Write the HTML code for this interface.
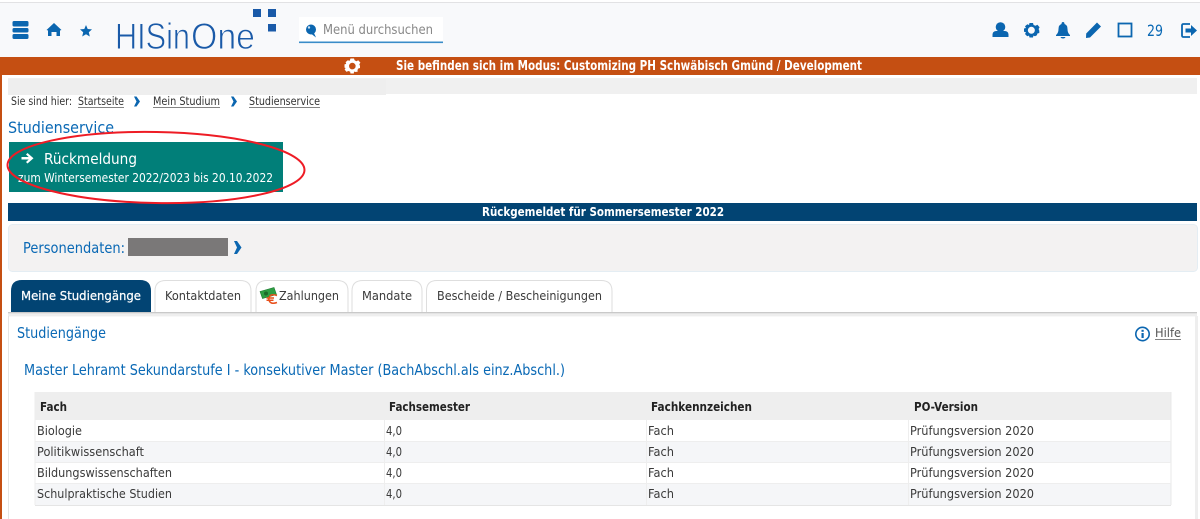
<!DOCTYPE html>
<html lang="de">
<head>
<meta charset="utf-8">
<title>HISinOne Studienservice</title>
<style>
html,body{margin:0;padding:0;background:#fff;width:1200px;height:519px;overflow:hidden}
svg{display:block}
text{font-family:"DejaVu Sans","Liberation Sans",sans-serif}
.b{fill:#0a69b5}
.d{fill:#333}
.w{fill:#fff}
.h{font-weight:bold}
</style>
</head>
<body>
<svg width="1200" height="519" viewBox="0 0 1200 519" xmlns="http://www.w3.org/2000/svg">
<rect width="1200" height="519" fill="#fff"/>
<!-- header -->
<rect x="0" y="2" width="1200" height="1" fill="#e2e2e4"/>
<rect x="0" y="3" width="1200" height="54" fill="#f8f9fb"/>
<g fill="#0b66b0">
<rect x="12.5" y="21" width="16" height="5.5" rx="1.5"/>
<rect x="12.5" y="28" width="16" height="4.5" rx="1.5"/>
<rect x="12.5" y="34" width="16" height="5" rx="1.5"/>
<path d="M54 23 L61.5 30 L60 30.5 V36 H56.5 V32 H51.5 V36 H48 V30.5 L46.5 30 Z"/>
<path d="M86 25 L87.7 29 L92 29.4 L88.8 32.2 L89.8 36.5 L86 34.2 L82.2 36.5 L83.2 32.2 L80 29.4 L84.3 29 Z"/>
</g>
<!-- logo -->
<g fill="#1a5aa8">
<rect x="253" y="9" width="8" height="8"/>
<rect x="268" y="9" width="8" height="8"/>
<rect x="268" y="24" width="8" height="7.5"/>
</g>
<g font-size="37" fill="#1a5aa8" stroke="#f8f9fb" stroke-width="0.9">
<text style="font-family:'Liberation Sans',sans-serif" x="115" y="49" textLength="75" lengthAdjust="spacingAndGlyphs">HISin</text>
<text style="font-family:'Liberation Sans',sans-serif" x="191" y="49" textLength="64" lengthAdjust="spacingAndGlyphs">One</text>
</g>
<!-- search -->
<rect x="299" y="17" width="144" height="26" fill="#fff"/>
<rect x="299" y="41.5" width="144" height="1.6" fill="#3a8cc8"/>
<circle cx="311" cy="29.5" r="5" fill="#0b66b0"/>
<path d="M311.5 34 L316 37.5 L314 33 Z" fill="#0b66b0"/>
<circle cx="309" cy="27.5" r="1.2" fill="#cfe2f2"/>
<text x="323" y="34" font-size="13" fill="#888" textLength="110" lengthAdjust="spacingAndGlyphs">Menü durchsuchen</text>
<!-- right icons -->
<g fill="#0b66b0">
<circle cx="1000.5" cy="27" r="4.8"/>
<path d="M992.5 37 V34.5 Q992.5 31.5 996 31 H1005 Q1008.5 31.5 1008.5 34.5 V37 Z"/>
<path fill-rule="evenodd" d="M1029.5 23 H1033 L1033.6 25 L1035.5 25.8 L1037.4 24.8 L1039.6 27.2 L1038.6 29 L1039.3 30.8 L1039.3 33 L1037.4 33.5 L1036.9 35.3 L1035 36.2 L1033.4 35.6 L1033 37.5 H1029.5 L1029 35.6 L1027.2 36.2 L1025 34 L1026 32.2 L1024 31.7 V28.5 L1026 28 L1025 26.3 L1027.4 24.2 L1029 25 Z M1031.3 26.8 A3.5 3.5 0 1 0 1031.4 33.8 A3.5 3.5 0 1 0 1031.3 26.8 Z"/>
<path d="M1063 22 Q1064.5 22 1064.5 24 Q1067.5 25 1067.5 29 Q1067.5 33 1070 35 V36 H1056 V35 Q1058.5 33 1058.5 29 Q1058.5 25 1061.5 24 Q1061.5 22 1063 22 Z"/>
<path d="M1060.5 37 H1065.5 Q1065 38.5 1063 38.5 Q1061 38.5 1060.5 37 Z"/>
<path d="M1097 22.5 L1101 26.5 L1090 37.5 L1086 38 L1086.2 33.5 Z"/>
</g>
<rect x="1118.5" y="23.5" width="13" height="13" fill="none" stroke="#0b66b0" stroke-width="1.8"/>
<text x="1147" y="36" font-size="16" class="b" textLength="16" lengthAdjust="spacingAndGlyphs">29</text>
<path d="M1190 24 H1183.5 Q1182 24 1182 25.5 V35.5 Q1182 37 1183.5 37 H1190" fill="none" stroke="#0b66b0" stroke-width="1.8"/>
<path d="M1185.5 28.5 H1191 V25 L1197 30.5 L1191 36 V32.5 H1185.5 Z" fill="#0b66b0"/>
<!-- orange bar -->
<rect x="0" y="57" width="1200" height="18" fill="#c54f12"/>
<path fill="#fff" fill-rule="evenodd" d="M350.5 58.5 H354 L354.6 60.3 L356.5 61.2 L358.2 60.2 L360.4 62.6 L359.3 64.2 L360 65.9 V68 L358.1 68.6 L357.4 70.4 L358 71.4 L355.9 72 L354 71.6 L353.8 73.5 H350.5 L350.1 71.6 L348.2 71 L346.6 71.9 L344.6 69.6 L345.6 68 L344.5 67.6 V64.4 L346.2 63.9 L345.6 62.1 L347.8 60.2 L349.6 60.9 Z M352.3 62.8 A3.3 3.3 0 1 0 352.4 69.4 A3.3 3.3 0 1 0 352.3 62.8 Z"/>
<text x="396" y="70" font-size="13" class="w h" textLength="466" lengthAdjust="spacingAndGlyphs">Sie befinden sich im Modus: Customizing PH Schwäbisch Gmünd / Development</text>
<!-- left orange rule -->
<rect x="0" y="75" width="2" height="444" fill="#c54f12"/>
<!-- grey strip -->
<rect x="8" y="78" width="1189" height="16" fill="#f0f0f0"/>
<rect x="8" y="79" width="378" height="16" fill="#eeeeee"/>
<!-- breadcrumb -->
<g font-size="11.5" class="d">
<text x="11" y="105" textLength="61" lengthAdjust="spacingAndGlyphs">Sie sind hier:</text>
<text x="78" y="105" textLength="46" lengthAdjust="spacingAndGlyphs">Startseite</text>
<text x="153" y="105" textLength="67" lengthAdjust="spacingAndGlyphs">Mein Studium</text>
<text x="249" y="105" textLength="71" lengthAdjust="spacingAndGlyphs">Studienservice</text>
</g>
<g fill="#666">
<rect x="78" y="107" width="46" height="0.8"/>
<rect x="153" y="107" width="67" height="0.8"/>
<rect x="249" y="107" width="71" height="0.8"/>
</g>
<g fill="#0b66b0">
<path d="M134 96.5 H136.5 L140 101.5 L136.5 106.5 H134 L136.5 101.5 Z"/>
<path d="M231 96.5 H233.5 L237 101.5 L233.5 106.5 H231 L233.5 101.5 Z"/>
</g>
<!-- heading -->
<text x="8" y="133" font-size="16" class="b" textLength="106" lengthAdjust="spacingAndGlyphs">Studienservice</text>
<!-- teal button -->
<rect x="9" y="142" width="274" height="50" fill="#017f79"/>
<path d="M27.5 153 L33.5 158.3 L27.5 163.5 L26 162 L28.7 159.5 H21.5 V157 H28.7 L26 154.5 Z" fill="#fff"/>
<text x="44" y="164" font-size="15.5" class="w" textLength="93" lengthAdjust="spacingAndGlyphs">Rückmeldung</text>
<text x="18" y="182" font-size="12.5" class="w" textLength="255" lengthAdjust="spacingAndGlyphs">zum Wintersemester 2022/2023 bis 20.10.2022</text>
<!-- navy bar -->
<rect x="8" y="203" width="1189" height="18" fill="#024473"/>
<text x="482" y="216" font-size="12.5" class="w h" textLength="242" lengthAdjust="spacingAndGlyphs">Rückgemeldet für Sommersemester 2022</text>
<!-- red ellipse -->
<ellipse cx="156" cy="167.5" rx="148.5" ry="35.5" fill="none" stroke="#ee1c25" stroke-width="2" transform="rotate(1 156 167.5)"/>
<!-- person box -->
<rect x="8.5" y="224.5" width="1189" height="47" rx="4" fill="#f3f2f2" stroke="#e4edf3"/>
<text x="23" y="253" font-size="15" class="b" textLength="102" lengthAdjust="spacingAndGlyphs">Personendaten:</text>
<rect x="128" y="238" width="100" height="18" fill="#7a7878"/>
<path d="M234 241 H237 L241.5 247.5 L237 254 H234 L237 247.5 Z" fill="#0b66b0"/>
<!-- tabs -->
<rect x="8" y="312" width="1189" height="1.4" fill="#c9c9c9"/>
<rect x="8" y="313.4" width="1189" height="3" fill="#eeeeee"/>
<path d="M11 312 V291 Q11 280 22 280 H140 Q151 280 151 291 V312 Z" fill="#024473"/>
<g fill="#fff" stroke="#dedede">
<path d="M155 312 V291 Q155 280.5 166 280.5 H240 Q251 280.5 251 291 V312"/>
<path d="M256 312 V291 Q256 280.5 267 280.5 H337 Q348 280.5 348 291 V312"/>
<path d="M352 312 V291 Q352 280.5 363 280.5 H411 Q422 280.5 422 291 V312"/>
<path d="M426.5 312 V291 Q426.5 280.5 437 280.5 H601 Q612 280.5 612 291 V312"/>
</g>
<text x="21" y="300" font-size="12.5" class="w" stroke="#fff" stroke-width="0.25" textLength="120" lengthAdjust="spacingAndGlyphs">Meine Studiengänge</text>
<g font-size="12.5" fill="#3a3a3a">
<text x="165" y="300" textLength="76" lengthAdjust="spacingAndGlyphs">Kontaktdaten</text>
<text x="279" y="300" textLength="60" lengthAdjust="spacingAndGlyphs">Zahlungen</text>
<text x="362" y="300" textLength="50" lengthAdjust="spacingAndGlyphs">Mandate</text>
<text x="437" y="300" textLength="165" lengthAdjust="spacingAndGlyphs">Bescheide / Bescheinigungen</text>
</g>
<!-- money icon -->
<path d="M260 291.5 L274 287.5 L276.5 294.5 L262.5 298.5 Z" fill="#2f9e44" stroke="#1d7a30" stroke-width="0.6"/>
<circle cx="266" cy="293.5" r="2" fill="#1d6b2a"/>
<path d="M277 295.5 Q269.5 293 268.8 299 Q269.5 305 277 302.5 M266.5 298 H274 M266.5 300.3 H273.5" fill="none" stroke="#e8501c" stroke-width="1.5"/>
<!-- content box -->
<rect x="8" y="316" width="1" height="203" fill="#e5e5e5"/>
<rect x="1195" y="316" width="3" height="203" fill="#eeeeee"/>
<text x="17" y="338" font-size="15" class="b" textLength="89" lengthAdjust="spacingAndGlyphs">Studiengänge</text>
<circle cx="1142.5" cy="334" r="6.7" fill="#fff" stroke="#0b66b0" stroke-width="1.6"/>
<rect x="1141.5" y="333" width="2.2" height="5" fill="#0b66b0"/>
<rect x="1141.5" y="329.8" width="2.2" height="2" fill="#0b66b0"/>
<text x="1155" y="337" font-size="12.5" fill="#555" textLength="26" lengthAdjust="spacingAndGlyphs">Hilfe</text>
<rect x="1155" y="339" width="26" height="0.8" fill="#666"/>
<text x="24" y="375" font-size="15" class="b" textLength="541" lengthAdjust="spacingAndGlyphs">Master Lehramt Sekundarstufe I - konsekutiver Master (BachAbschl.als einz.Abschl.)</text>
<!-- table -->
<rect x="35" y="392" width="1136" height="28" fill="#eeeeee"/>
<rect x="35" y="441" width="1136" height="22" fill="#f5f6f8"/>
<rect x="35" y="484" width="1136" height="21" fill="#f5f6f8"/>
<rect x="35" y="505" width="1136" height="1" fill="#e5e5e5"/>
<rect x="1170.5" y="392" width="1" height="113" fill="#e8e8e8"/>
<rect x="34.5" y="392" width="1" height="113" fill="#eeeeee"/>
<g fill="#eeeeee">
<rect x="384" y="420" width="1" height="85"/>
<rect x="646" y="420" width="1" height="85"/>
<rect x="908" y="420" width="1" height="85"/>
<rect x="35" y="441" width="1136" height="1"/>
<rect x="35" y="462" width="1136" height="1"/>
<rect x="35" y="483" width="1136" height="1"/>
</g>
<g font-size="12.5" fill="#222" class="h">
<text x="40" y="411" textLength="27" lengthAdjust="spacingAndGlyphs">Fach</text>
<text x="389" y="411" textLength="81" lengthAdjust="spacingAndGlyphs">Fachsemester</text>
<text x="651" y="411" textLength="101" lengthAdjust="spacingAndGlyphs">Fachkennzeichen</text>
<text x="914" y="411" textLength="64" lengthAdjust="spacingAndGlyphs">PO-Version</text>
</g>
<g font-size="12.5" fill="#3a3a3a">
<text x="37" y="435" textLength="45" lengthAdjust="spacingAndGlyphs">Biologie</text>
<text x="386" y="435" textLength="16" lengthAdjust="spacingAndGlyphs">4,0</text>
<text x="648" y="435" textLength="26" lengthAdjust="spacingAndGlyphs">Fach</text>
<text x="910" y="435" textLength="124" lengthAdjust="spacingAndGlyphs">Prüfungsversion 2020</text>
<text x="37" y="456" textLength="107" lengthAdjust="spacingAndGlyphs">Politikwissenschaft</text>
<text x="386" y="456" textLength="16" lengthAdjust="spacingAndGlyphs">4,0</text>
<text x="648" y="456" textLength="26" lengthAdjust="spacingAndGlyphs">Fach</text>
<text x="910" y="456" textLength="124" lengthAdjust="spacingAndGlyphs">Prüfungsversion 2020</text>
<text x="37" y="477" textLength="135" lengthAdjust="spacingAndGlyphs">Bildungswissenschaften</text>
<text x="386" y="477" textLength="16" lengthAdjust="spacingAndGlyphs">4,0</text>
<text x="648" y="477" textLength="26" lengthAdjust="spacingAndGlyphs">Fach</text>
<text x="910" y="477" textLength="124" lengthAdjust="spacingAndGlyphs">Prüfungsversion 2020</text>
<text x="37" y="498" textLength="135" lengthAdjust="spacingAndGlyphs">Schulpraktische Studien</text>
<text x="386" y="498" textLength="16" lengthAdjust="spacingAndGlyphs">4,0</text>
<text x="648" y="498" textLength="26" lengthAdjust="spacingAndGlyphs">Fach</text>
<text x="910" y="498" textLength="124" lengthAdjust="spacingAndGlyphs">Prüfungsversion 2020</text>
</g>
</svg>
</body>
</html>
